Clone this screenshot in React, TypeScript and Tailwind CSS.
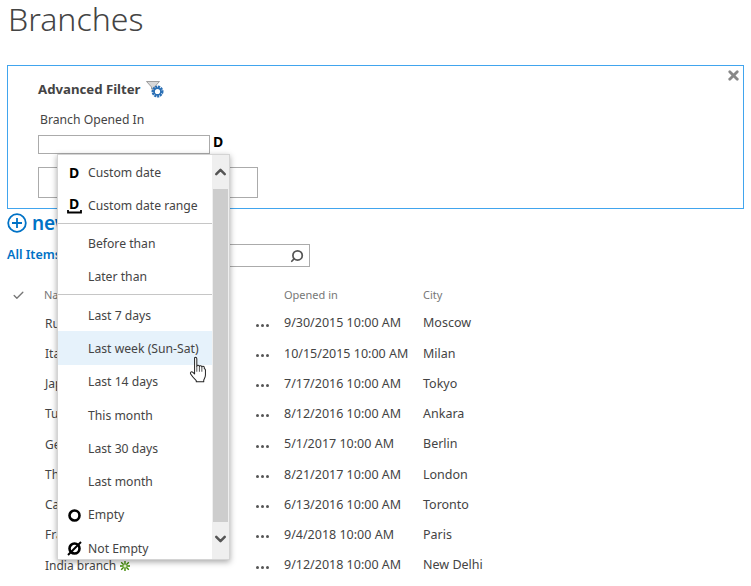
import { X, Search, Check, ChevronUp, ChevronDown } from "lucide-react"

const rows = [
  ["Russia branch", "9/30/2015 10:00 AM", "Moscow"],
  ["Italy branch", "10/15/2015 10:00 AM", "Milan"],
  ["Japan branch", "7/17/2016 10:00 AM", "Tokyo"],
  ["Turkey branch", "8/12/2016 10:00 AM", "Ankara"],
  ["Germany branch", "5/1/2017 10:00 AM", "Berlin"],
  ["The UK branch", "8/21/2017 10:00 AM", "London"],
  ["Canada branch", "6/13/2016 10:00 AM", "Toronto"],
  ["France branch", "9/4/2018 10:00 AM", "Paris"],
  ["India branch", "9/12/2018 10:00 AM", "New Delhi"],
]

function DIcon() {
  return <span className="font-['Liberation_Sans',sans-serif] text-[14px] font-bold leading-[14px] text-black">D</span>
}

function DRangeIcon() {
  return (
    <span className="flex flex-col items-center">
      <span className="font-['Liberation_Sans',sans-serif] text-[14px] font-bold leading-[12px] text-black">D</span>
      <svg width="15" height="4" viewBox="0 0 15 4">
        <path d="M1 0v2.500h13V0" fill="none" stroke="#000" strokeWidth="1.800" />
      </svg>
    </span>
  )
}

function CircleIcon({ slashed }: { slashed?: boolean }) {
  return (
    <svg width="15" height="15" viewBox="0 0 15 15">
      <circle cx="7.500" cy="7.500" r="5" fill="none" stroke="#000" strokeWidth="2.600" />
      {slashed && <path d="M1 14 14 1" stroke="#000" strokeWidth="2" />}
    </svg>
  )
}

function FilterGear() {
  return (
    <svg width="18" height="17" viewBox="0 0 18 17">
      <path d="M0.500 0.500h13l-5 5.500v4l-3-2v-2z" fill="#d8d8d8" stroke="#8c8c8c" strokeWidth="0.800" />
      <circle cx="11.500" cy="10.500" r="4.600" fill="none" stroke="#2a6fb5" strokeWidth="2.800" strokeDasharray="2 0.700" />
      <circle cx="11.500" cy="10.500" r="3.400" fill="none" stroke="#2a6fb5" strokeWidth="1.600" />
      <circle cx="11.500" cy="10.500" r="1.600" fill="#fff" />
    </svg>
  )
}

function Hand() {
  return (
    <svg width="19" height="27" viewBox="0 0 17 24">
      <path
        d="M5 1.500c1-.8 2-.3 2 1V9c0-1 2.300-1 2.300.3 0-1 2.200-1 2.200.4 0-1 2.200-.8 2.200.6v1c.6 0 1 .4 1 1V17c0 2-.8 3-1.500 4.500v1.500H6.500V22c-1.500-1.500-3.500-3.500-5-6-.8-1.300.6-2.700 2-1.500l1.500 1.500z"
        fill="#fff"
        stroke="#222"
        strokeWidth="0.900"
        strokeLinejoin="round"
      />
      <path d="M7 9v5M9.300 9.500V14M11.500 10v4" stroke="#222" strokeWidth="0.700" fill="none" />
    </svg>
  )
}

function Sparkle() {
  return (
    <svg width="10" height="10" viewBox="0 0 10 10" className="ml-[4px]">
      <path d="M5 0v10M0 5h10M1.200 1.200l7.600 7.600M8.800 1.200l-7.600 7.600" stroke="#3f8a00" strokeWidth="1.400" />
      <rect x="3.500" y="3.500" width="3" height="3" fill="#e6f5d0" />
    </svg>
  )
}

type Item = { label: string; icon?: React.ReactNode; hover?: boolean }

const groups: Item[][] = [
  [
    { label: "Custom date", icon: <DIcon /> },
    { label: "Custom date range", icon: <DRangeIcon /> },
  ],
  [{ label: "Before than" }, { label: "Later than" }],
  [
    { label: "Last 7 days" },
    { label: "Last week (Sun-Sat)", hover: true },
    { label: "Last 14 days" },
    { label: "This month" },
    { label: "Last 30 days" },
    { label: "Last month" },
    { label: "Empty", icon: <CircleIcon /> },
    { label: "Not Empty", icon: <CircleIcon slashed /> },
  ],
]

function DateMenu() {
  return (
    <div className="absolute left-[57px] top-[154px] z-10 flex h-[406px] w-[173px] overflow-hidden border border-[#d4d4d4] bg-white shadow-[0_2px_6px_rgba(0,0,0,0.35)]">
      <div className="w-[155px]">
        {groups.map((group, i) => (
          <div key={i} className={i > 0 ? "mt-[1px] border-t border-[#c6c6c6] pt-[3px]" : ""}>
            {group.map((item) => (
              <div
                key={item.label}
                className={`flex h-[33.3px] items-center text-[12.2px] text-[#444] ${item.hover ? "bg-[#e6f2fb]" : ""}`}
              >
                <span className="flex w-[30px] shrink-0 justify-center pl-[2px] pt-[2px]">{item.icon}</span>
                <span className="pt-[2px]">{item.label}</span>
              </div>
            ))}
          </div>
        ))}
      </div>
      <div className="flex w-[17px] flex-col bg-[#efefef]">
        <div className="flex h-[34px] items-center justify-center text-[#555]">
          <ChevronUp size={20} strokeWidth={3.500} />
        </div>
        <div className="mx-[1px] flex-1 bg-[#cdcdcd]" />
        <div className="flex h-[37px] items-center justify-center pb-[4px] text-[#555]">
          <ChevronDown size={20} strokeWidth={3.500} />
        </div>
      </div>
    </div>
  )
}

export default function App() {
  return (
    <div className="relative h-[586px] w-[751px] overflow-hidden bg-white font-['Open_Sans',sans-serif] text-[#444]">
      <h1 className="ml-2 h-[65px] text-[32px] font-light leading-[38px] text-[#444]">Branches</h1>

      <section className="relative mx-[7px] h-[144px] border border-[#41a5ee] pl-[30px] pt-[14px]">
        <X size={15} strokeWidth={4.500} className="absolute right-[2px] top-[2px] text-[#888]" />
        <div className="flex h-[19px] items-center gap-[5px]">
          <span className="text-[13.2px] font-bold leading-[17px] text-[#444]">Advanced Filter</span>
          <FilterGear />
        </div>
        <div className="mt-[13px] pl-[2px] text-[12.2px] leading-[16px]">Branch Opened In</div>
        <div className="mt-[7px] flex items-start gap-[3px]">
          <div className="h-[19px] w-[172px] border border-[#ababab]" />
          <DIcon />
        </div>
        <div className="mt-[13px] h-[31px] w-[220px] border border-[#ababab]" />
      </section>

      <div className="ml-[7px] mt-[4px] flex h-[20px] items-center gap-[5px] text-[#0072c6]">
        <svg width="20" height="20" viewBox="0 0 20 20">
          <circle cx="10" cy="10" r="8.800" fill="none" stroke="#0072c6" strokeWidth="1.800" />
          <path d="M10 5v10M5 10h10" stroke="#0072c6" strokeWidth="1.800" />
        </svg>
        <span className="text-[19px] font-semibold leading-none">new item</span>
      </div>

      <div className="ml-[7px] mt-[11px] flex h-[23px] items-center justify-between pr-[441px]">
        <span className="text-[12.5px] font-semibold text-[#0072c6]">All Items</span>
        <div className="flex h-[23px] w-[150px] items-center justify-end border border-[#ababab] pr-[5px]">
          <Search size={14} strokeWidth={3} className="-scale-x-100 text-[#555]" />
        </div>
      </div>

      <div className="mt-[18px] flex h-[20px] items-center text-[11px] text-[#777]">
        <span className="flex w-[44px] justify-center pr-[7px]">
          <Check size={13} strokeWidth={2.500} />
        </span>
        <span className="w-[240px]">Name</span>
        <span className="w-[139px]">Opened in</span>
        <span>City</span>
      </div>

      <div className="mt-[3.500px]">
        {rows.map(([name, opened, city]) => (
          <div key={name} className="flex h-[30.25px] items-center text-[12.5px]">
            <span className="flex w-[256px] items-center pl-[45px] text-[12px]">
              {name}
              {name === "India branch" && <Sparkle />}
            </span>
            <span className="flex w-[28px] gap-[2px] pt-[3px]">
              <i className="h-[3px] w-[3px] rounded-full bg-[#555]" />
              <i className="h-[3px] w-[3px] rounded-full bg-[#555]" />
              <i className="h-[3px] w-[3px] rounded-full bg-[#555]" />
            </span>
            <span className="w-[139px]">{opened}</span>
            <span>{city}</span>
          </div>
        ))}
      </div>

      <DateMenu />
      <div className="absolute left-[189px] top-[356px] z-20">
        <Hand />
      </div>
    </div>
  )
}
